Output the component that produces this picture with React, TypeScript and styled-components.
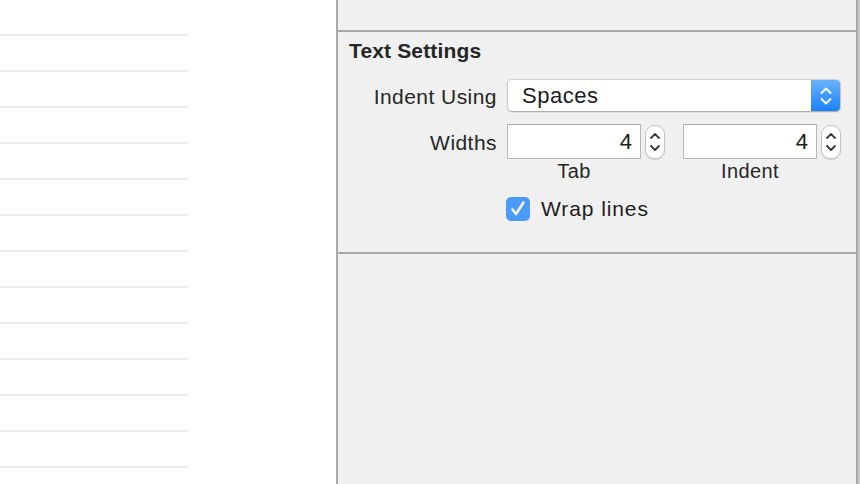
import React from "react";
import styled, { createGlobalStyle } from "styled-components";

const Global = createGlobalStyle`
  html, body { margin: 0; padding: 0; background: #ffffff; }
  body { font-family: "Liberation Sans", Arial, sans-serif; color: #262626; }
  #root { width: 860px; height: 484px; overflow: hidden; }
`;

const Page = styled.div`
  display: flex;
  width: 860px;
  height: 484px;
`;

const ListArea = styled.div`
  width: 336px;
  flex: none;
  background: #ffffff;
`;

const List = styled.div`
  width: 188px;
  display: flex;
  flex-direction: column;
`;

const ListRow = styled.div`
  height: 34px;
  border-bottom: 2px solid #ececec;
`;

const Inspector = styled.div`
  flex: 1;
  display: flex;
  flex-direction: column;
  background: #f0f0f0;
  border-left: 2px solid #a9a9a9;
  border-right: 2px solid #a9a9a9;
`;

const EdgeStrip = styled.div`
  width: 2px;
  flex: none;
  background: #c9c9c9;
`;

const TopSection = styled.div`
  height: 30px;
  border-bottom: 2px solid #a9a9a9;
`;

const Section = styled.section`
  height: 222px;
  box-sizing: border-box;
  padding: 7px 15px 0 11px;
  border-bottom: 2px solid #a9a9a9;
  display: flex;
  flex-direction: column;
`;

const Title = styled.h2`
  margin: 0;
  font-size: 21px;
  line-height: 24px;
  font-weight: 700;
  letter-spacing: 0.15px;
  color: #262626;
`;

const Form = styled.div`
  display: grid;
  grid-template-columns: 148px 1fr;
  column-gap: 10px;
  margin-top: 16px;
`;

const Label = styled.div<{ $h: number; $top?: number }>`
  height: ${(p) => p.$h}px;
  margin-top: ${(p) => p.$top ?? 0}px;
  display: flex;
  align-items: center;
  justify-content: flex-end;
  padding-top: 1px;
  font-size: 21px;
  letter-spacing: 0.45px;
  color: #262626;
  white-space: nowrap;
`;

const Popup = styled.div`
  height: 33px;
  box-sizing: border-box;
  display: flex;
  background: #ffffff;
  border: 1px solid #c6c6c6;
  border-top-color: #d2d2d2;
  border-bottom-color: #b0b0b0;
  border-radius: 5px;
  overflow: hidden;
  box-shadow: 0 1px 1px rgba(0, 0, 0, 0.06);
`;

const PopupText = styled.div`
  flex: 1;
  display: flex;
  align-items: center;
  padding-left: 14px;
  padding-top: 1px;
  font-size: 22px;
  letter-spacing: 0.5px;
  color: #1c1c1c;
`;

const PopupArrows = styled.div`
  width: 29px;
  display: flex;
  align-items: center;
  justify-content: center;
  background: linear-gradient(#6ab2fb, #1b81fb);
`;

const Pairs = styled.div`
  margin-top: 11px;
  display: flex;
  gap: 18px;
`;

const Group = styled.div`
  display: flex;
  flex-direction: column;
`;

const FieldLine = styled.div`
  display: flex;
  align-items: center;
  gap: 4px;
`;

const NumField = styled.div`
  width: 134px;
  height: 35px;
  box-sizing: border-box;
  border: 1px solid #b6b6b6;
  border-top-color: #a8a8a8;
  background: #ffffff;
  display: flex;
  align-items: center;
  justify-content: flex-end;
  padding-right: 8px;
  padding-top: 1px;
  font-size: 22px;
  color: #1c1c1c;
`;

const Stepper = styled.div`
  width: 20px;
  height: 34px;
  box-sizing: border-box;
  border: 1px solid #c4c4c4;
  border-radius: 9px;
  background: #ffffff;
  box-shadow: 0 1px 1px rgba(0, 0, 0, 0.12);
  display: flex;
  align-items: center;
  justify-content: center;
`;

const Caption = styled.div`
  width: 134px;
  text-align: center;
  font-size: 20px;
  line-height: 24px;
  letter-spacing: 0.4px;
  color: #262626;
`;

const CheckRow = styled.label`
  margin-top: 14px;
  margin-left: -1px;
  display: flex;
  align-items: center;
  gap: 11px;
  font-size: 21px;
  letter-spacing: 0.9px;
  color: #1c1c1c;
`;

const CheckBox = styled.span`
  width: 24px;
  height: 24px;
  border-radius: 5px;
  background: #4a9cf8;
  display: flex;
  align-items: center;
  justify-content: center;
`;

const Rest = styled.div`
  flex: 1;
`;

const PopupChevrons = () => (
  <svg width="12" height="18" viewBox="0 0 12 18" fill="none">
    <path d="M1.5 6 L6 1.5 L10.5 6" stroke="#ffffff" strokeWidth="1.8" strokeLinecap="round" strokeLinejoin="round" />
    <path d="M1.5 12 L6 16.5 L10.5 12" stroke="#ffffff" strokeWidth="1.8" strokeLinecap="round" strokeLinejoin="round" />
  </svg>
);

const StepperChevrons = () => (
  <svg width="10" height="18" viewBox="0 0 10 18" fill="none">
    <path d="M1 5 L5 1 L9 5" stroke="#3a3a3a" strokeWidth="1.8" strokeLinecap="round" strokeLinejoin="round" />
    <path d="M1 13 L5 17 L9 13" stroke="#3a3a3a" strokeWidth="1.8" strokeLinecap="round" strokeLinejoin="round" />
  </svg>
);

const WidthField = ({ caption }: { caption: string }) => (
  <Group>
    <FieldLine>
      <NumField>4</NumField>
      <Stepper>
        <StepperChevrons />
      </Stepper>
    </FieldLine>
    <Caption>{caption}</Caption>
  </Group>
);

export default function App() {
  const rows = Array.from({ length: 13 });
  return (
    <>
      <Global />
      <Page>
        <ListArea>
          <List>
            {rows.map((_, i) => (
              <ListRow key={i} />
            ))}
          </List>
        </ListArea>
        <Inspector>
          <TopSection />
          <Section>
            <Title>Text Settings</Title>
            <Form>
              <Label $h={33}>Indent Using</Label>
              <Popup>
                <PopupText>Spaces</PopupText>
                <PopupArrows>
                  <PopupChevrons />
                </PopupArrows>
              </Popup>
              <Label $h={35} $top={11}>Widths</Label>
              <div>
                <Pairs>
                  <WidthField caption="Tab" />
                  <WidthField caption="Indent" />
                </Pairs>
                <CheckRow>
                  <CheckBox>
                    <svg width="24" height="24" viewBox="0 0 24 24" fill="none">
                      <path d="M6.5 12.5 L10 17 L17.5 5.5" stroke="#ffffff" strokeWidth="2.4" strokeLinecap="round" strokeLinejoin="round" />
                    </svg>
                  </CheckBox>
                  Wrap lines
                </CheckRow>
              </div>
            </Form>
          </Section>
          <Rest />
        </Inspector>
        <EdgeStrip />
      </Page>
    </>
  );
}
